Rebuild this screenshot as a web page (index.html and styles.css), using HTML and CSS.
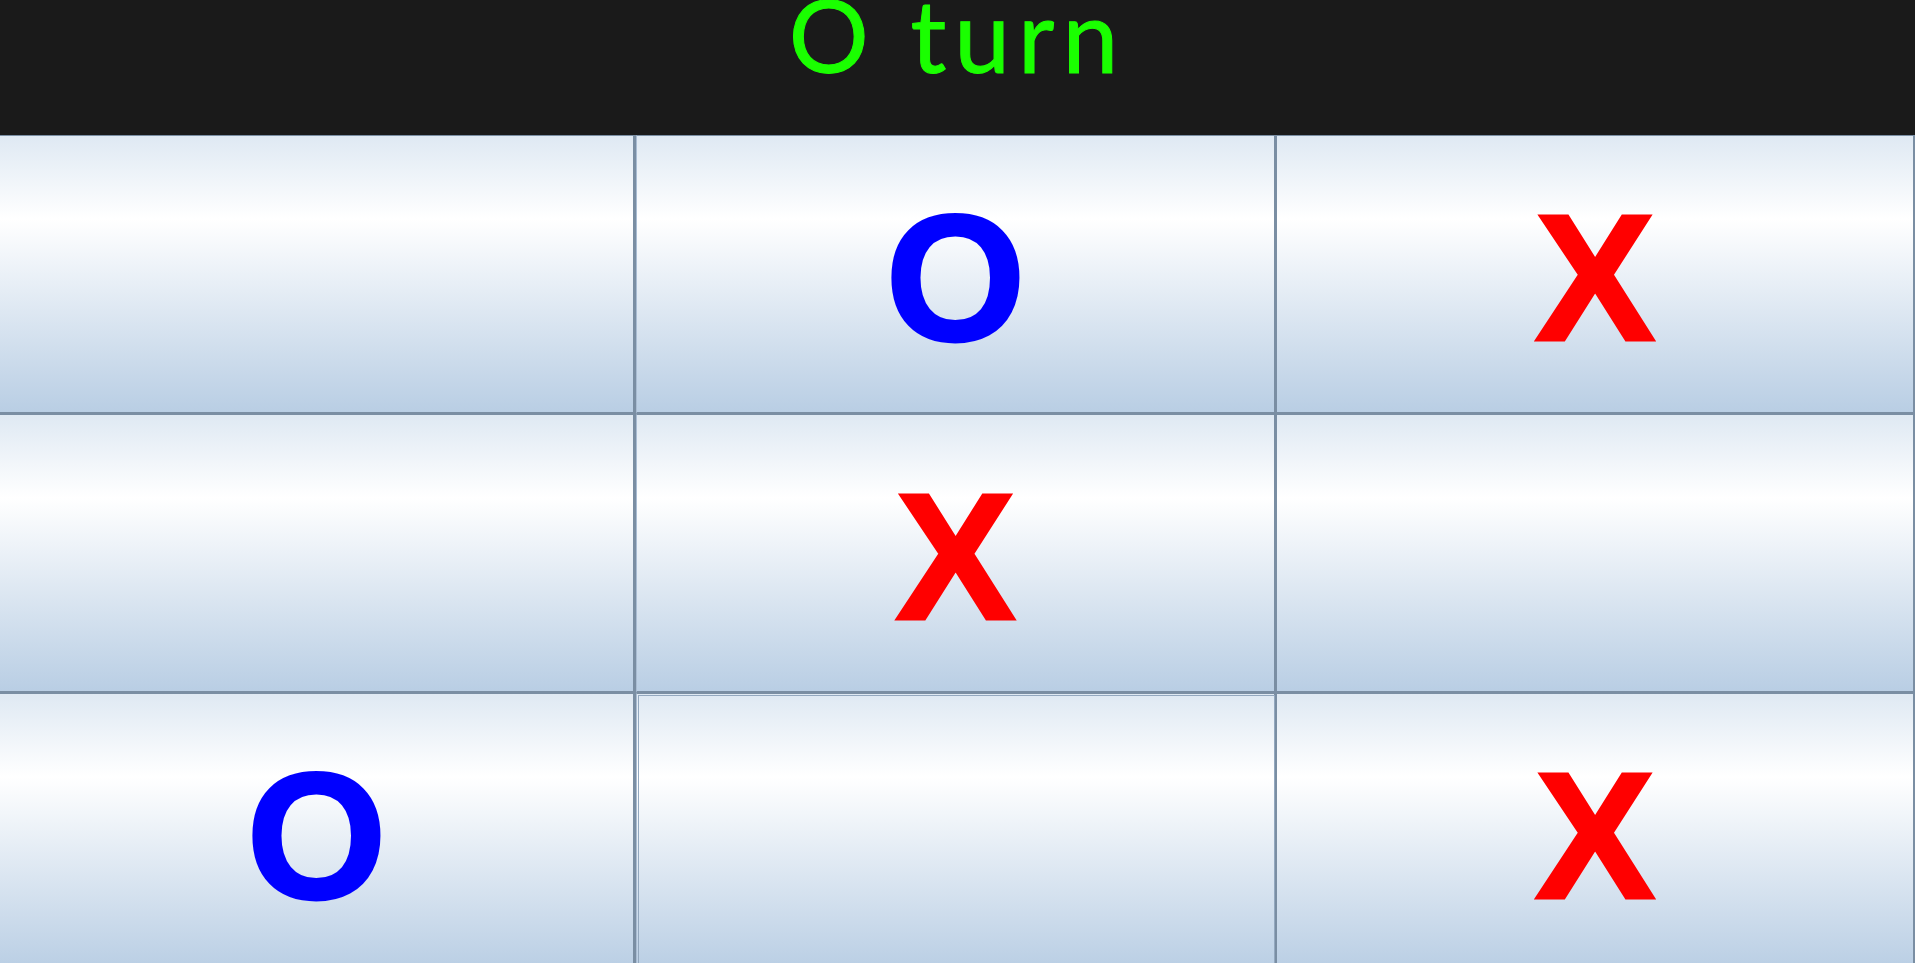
FILE: index.html
```html
<!DOCTYPE html>
<html lang="en">
<head>
  <meta charset="UTF-8">
  <meta name="viewport" content="width=device-width, initial-scale=1.0">
  <title>Tic Tac Toe</title>
  <link rel="stylesheet" href="styles.css">
</head>
<body>
  <div class="header">
    <h1 class="turn">O turn</h1>
  </div>
  <div class="board">
    <button class="cell"></button>
    <button class="cell o">O</button>
    <button class="cell x">X</button>
    <button class="cell"></button>
    <button class="cell x">X</button>
    <button class="cell"></button>
    <button class="cell o">O</button>
    <button class="cell focused"></button>
    <button class="cell x">X</button>
  </div>
</body>
</html>
```

FILE: styles.css
```css
html, body {
  height: 100%;
  margin: 0;
  overflow: hidden;
}
body {
  background-color: #1a1a1a;
}
.header {
  height: 135px;
  background-color: #1a1a1a;
  display: flex;
  justify-content: center;
}
.turn {
  margin: 0;
  color: #1aff00;
  font-family: "Lato", sans-serif;
  font-size: 100px;
  font-weight: 400;
  line-height: 68px;
  letter-spacing: 8px;
  -webkit-text-stroke: 1px #1aff00;
}
.board {
  display: grid;
  grid-template-columns: 636px 641px 638px;
  grid-auto-rows: 279px;
}
.cell {
  padding: 6px 0 0;
  border: 0 solid #7a8ea3;
  border-width: 1px 2px 2px 0;
  background: linear-gradient(to bottom, #dfe9f3 0%, #ffffff 30%, #b9cee4 100%);
  font-family: "Liberation Sans", Arial, sans-serif;
  font-size: 180px;
  font-weight: 700;
  -webkit-text-stroke: 3px;
}
.cell:nth-child(3n + 1) {
  border-right-width: 3px;
}
.cell:nth-child(3n + 2) {
  border-right-width: 3px;
  border-left: 1px solid #a9bcd2;
}
.cell.o {
  color: #0000ff;
}
.cell.x {
  color: #ff0000;
}
.cell.focused {
  outline: 1px solid #93a8bf;
  outline-offset: -3px;
}
```
